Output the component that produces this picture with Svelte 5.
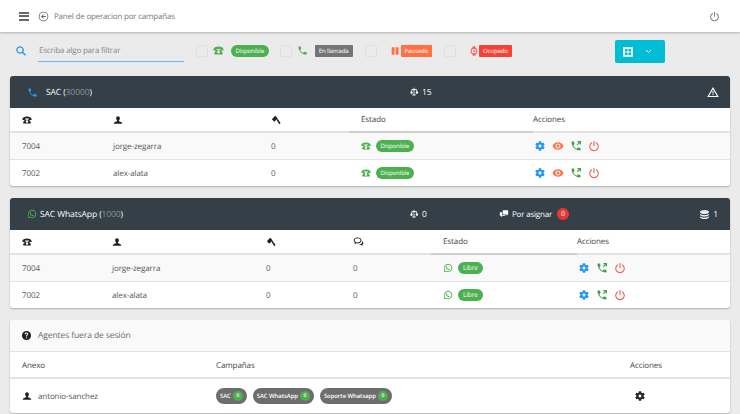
<script>
  const paths = {
    phone: 'M6.62 10.79c1.44 2.83 3.76 5.14 6.59 6.59l2.2-2.2c.27-.27.67-.36 1.02-.24 1.12.37 2.33.57 3.57.57.55 0 1 .45 1 1V20c0 .55-.45 1-1 1-9.39 0-17-7.61-17-17 0-.55.45-1 1-1h3.5c.55 0 1 .45 1 1 0 1.25.2 2.45.57 3.57.11.35.03.74-.25 1.02l-2.2 2.2z',
    transfer: 'M6.62 10.79c1.44 2.83 3.76 5.14 6.59 6.59l2.2-2.2c.27-.27.67-.36 1.02-.24 1.12.37 2.33.57 3.57.57.55 0 1 .45 1 1V20c0 .55-.45 1-1 1-9.39 0-17-7.61-17-17 0-.55.45-1 1-1h3.5c.55 0 1 .45 1 1 0 1.25.2 2.45.57 3.57.11.35.03.74-.25 1.02l-2.2 2.2zM15 2h7v7h-2.400V6.100l-4.500 4.500-1.700-1.700 4.500-4.500H15z',
    classic: 'M1 10C1 6 6 3.500 12 3.500S23 6 23 10v2h-6V8.500H7V12H1zM8 10h2v2h4v-2h2l5 7v3.500H3V17zM12 12.500a3 3 0 1 0 0 6 3 3 0 0 0 0-6z',
    person: 'M12 3c2.800 0 4.500 2 4.500 5 0 2.300-1 4.200-2.300 5.200v1.600c3.200.8 7.300 2 7.800 4.200v2H2v-2c.5-2.200 4.600-3.400 7.800-4.200v-1.600C8.500 12.200 7.500 10.300 7.500 8c0-3 1.700-5 4.500-5z',
    gavel: 'M2 10L10 2l6 6-8 8zM13 11.500l2.500-2.500 7.500 10-3 3z',
    chat: 'M10 3C5 3 1.500 5.800 1.500 9.500c0 2 1 3.700 2.700 4.900L3 18l4.500-2c.8.200 1.600.300 2.500.300 5 0 8.500-2.900 8.500-6.800S15 3 10 3zm0 2c3.700 0 6.500 2 6.500 4.500S13.700 14 10 14c-.9 0-1.700-.1-2.500-.4l-1.300.6.300-1.100C4.600 12.200 3.500 11 3.500 9.500 3.500 7 6.300 5 10 5zM20 11c1.600.9 2.500 2.300 2.500 3.800 0 1.400-.7 2.600-2 3.500l1 3-3.500-1.800c-.8.200-1.500.300-2.300.300-1.500 0-2.800-.4-3.900-1 3.500-.1 6.800-1.500 8-4.300.2-.5.300-1 .2-3.500z',
    whatsapp: 'M12 2a10 10 0 0 0-8.600 15L2 22l5.200-1.400A10 10 0 1 0 12 2zm0 2a8 8 0 1 1-4.300 14.700l-.4-.2-2.500.7.7-2.400-.3-.4A8 8 0 0 1 12 4zM8.900 7.500c-.4 0-.9.200-1.300.7-.5.600-.9 1.300-.8 2.300.1 1.300 1 2.800 2.200 4 1.400 1.400 3 2.200 4.300 2.400 1 .1 1.900-.3 2.400-.9.4-.5.500-1.100.4-1.500l-2-1-.9 1c-.8-.2-1.800-.9-2.500-1.600-.7-.7-1.200-1.500-1.400-2.100l.8-1-.8-2.200z',
    gear: 'M19.140 12.940c.04-.3.06-.61.06-.94 0-.32-.02-.64-.07-.94l2.030-1.580c.18-.14.23-.41.12-.61l-1.920-3.320c-.12-.22-.37-.29-.59-.22l-2.390.96c-.5-.38-1.030-.7-1.620-.94l-.36-2.540c-.04-.24-.24-.41-.48-.41h-3.840c-.24 0-.43.17-.47.41l-.36 2.540c-.59.24-1.130.57-1.620.94l-2.390-.96c-.22-.08-.47 0-.59.22L2.740 8.870c-.12.21-.08.47.12.61l2.030 1.580c-.05.3-.09.63-.09.94s.02.64.07.94l-2.030 1.580c-.18.14-.23.41-.12.61l1.920 3.320c.12.22.37.29.59.22l2.390-.96c.5.38 1.030.7 1.620.94l.36 2.540c.05.24.24.41.48.41h3.840c.24 0 .44-.17.47-.41l.36-2.540c.59-.24 1.130-.56 1.620-.94l2.390.96c.22.08.47 0 .59-.22l1.920-3.320c.12-.22.07-.47-.12-.61l-2.010-1.580zM12 15c-1.650 0-3-1.350-3-3s1.350-3 3-3 3 1.350 3 3-1.350 3-3 3z',
    eye: 'M12 4.500C7 4.500 2.730 7.610 1 12c1.730 4.390 6 7.500 11 7.500s9.270-3.110 11-7.500c-1.730-4.390-6-7.500-11-7.500zM12 17c-2.760 0-5-2.240-5-5s2.240-5 5-5 5 2.240 5 5-2.240 5-5 5zm0-8c-1.660 0-3 1.340-3 3s1.340 3 3 3 3-1.340 3-3-1.340-3-3-3z',
    power: 'M11 2h2v10h-2zM16.500 4.600l-1.300 1.600a7.500 7.500 0 1 1-6.400 0L7.500 4.600a9.500 9.500 0 1 0 9 0z',
    pause: 'M4 3h7v18H4zM13.500 3h7v18h-7z',
    watch: 'M8.500 1h7v3h-7zM8.500 20h7v3h-7zM12 4a8 8 0 1 0 0 16 8 8 0 0 0 0-16zm0 2a6 6 0 1 1 0 12 6 6 0 0 1 0-12zM11 8h2v4h3v2h-5z',
    warning: 'M12 2L.5 22h23zM12 6.500L19.800 20H4.200zM11 10h2v5.500h-2zM11 16.500h2v2h-2z',
    scale: 'M11 2h2v2.500l6 1v1.500l3 6.500c0 1.700-1.500 2.500-3 2.500s-3-.8-3-2.500l2.500-5.800L13 7v11h3v2.500H8V18h3V7l-4.500 1.200L9 14c0 1.700-1.500 2.500-3 2.500S3 15.700 3 14l3-6.500V5.500l5-1z',
    layers: 'M12 2C6.500 2 2 4 2 6.500S6.500 11 12 11s10-2 10-4.500S17.500 2 12 2zM2 10.500V12c0 2.500 4.500 4.500 10 4.500S22 14.500 22 12v-1.500c-1.800 1.800-5.500 2.800-10 2.800s-8.200-1-10-2.800zM2 16v1.500C2 20 6.500 22 12 22s10-2 10-4.500V16c-1.800 1.800-5.500 2.800-10 2.800S3.800 17.800 2 16z',
    comments: 'M9 3h13v10h-2v3l-3-3H9zM2 8h5.500v6.500H15V16H8l-3.500 4v-4H2z',
    help: 'M12 2a10 10 0 1 0 0 20 10 10 0 0 0 0-20zm1 16h-2.200v-2.200H13zm2.300-7.600c-.9 1.200-2.300 1.500-2.300 3.600h-2.200c0-3 1.500-3.400 2.300-4.400.6-.8.300-2-1.100-2-1.100 0-1.700.8-1.800 1.800H7.900C8 6.900 9.600 5.600 12 5.600c3 0 4.500 2.600 3.300 4.800z',
    search: 'M10 2.500a7.500 7.500 0 1 0 4.500 13.500l5.500 5.500 2-2-5.500-5.500A7.500 7.500 0 0 0 10 2.500zm0 2.500a5 5 0 1 1 0 10 5 5 0 0 1 0-10z',
    back: 'M12 1.500a10.500 10.500 0 1 0 0 21 10.500 10.500 0 0 0 0-21zm0 1.800a8.700 8.700 0 1 1 0 17.400 8.700 8.700 0 0 1 0-17.400zM11.500 7l1.300 1.300-2.800 2.800h7v1.800h-7l2.800 2.800-1.300 1.300-5-5z'
  };

  const voiceRows = [
    { ext: '7004', name: 'jorge-zegarra', calls: 0 },
    { ext: '7002', name: 'alex-alata', calls: 0 }
  ];
  const waRows = [
    { ext: '7004', name: 'jorge-zegarra', calls: 0, chats: 0 },
    { ext: '7002', name: 'alex-alata', calls: 0, chats: 0 }
  ];
  const campaigns = ['SAC', 'SAC WhatsApp', 'Soporte Whatsapp'];
</script>

{#snippet icon(name, size, color)}
  <svg class="icon" width={size} height={size} viewBox="0 0 24 24" fill={color} fill-rule="evenodd"><path d={paths[name]} /></svg>
{/snippet}

<header class="topbar">
  <div class="burger"><span></span><span></span><span></span></div>
  {@render icon('back', 11, '#666')}
  <span class="page-title">Panel de operacion por campañas</span>
  <div class="logout">{@render icon('power', 11, '#777')}</div>
</header>

<section class="filters">
  <div class="search">{@render icon('search', 12, '#2196f3')}</div>
  <div class="filter-input">Escriba algo para filtrar</div>
  <div class="legend l1">
    <span class="check"></span>
    <span class="legend-icon">{@render icon('classic', 11, '#4caf50')}</span>
    <span class="badge pill green">Disponible</span>
  </div>
  <div class="legend l2">
    <span class="check"></span>
    <span class="legend-icon">{@render icon('phone', 11, '#4caf50')}</span>
    <span class="badge grey">En llamada</span>
  </div>
  <div class="legend l3">
    <span class="check"></span>
    <span class="legend-icon">{@render icon('pause', 10, '#ff7043')}</span>
    <span class="badge orange">Pausado</span>
  </div>
  <div class="legend l4">
    <span class="check"></span>
    <span class="legend-icon">{@render icon('watch', 10, '#f44336')}</span>
    <span class="badge red">Ocupado</span>
  </div>
  <button class="grid-btn">
    <svg width="10" height="10" viewBox="0 0 10 10"><rect width="10" height="10" rx="1" fill="#e6fafd" /><path d="M2 2h2.500v2.500H2zM5.500 2H8v2.500H5.500zM2 5.500h2.500V8H2zM5.500 5.500H8V8H5.500z" fill="#00bcd4" /></svg>
    <svg class="chev" width="7" height="5" viewBox="0 0 7 5"><path d="M1 1l2.500 2.500L6 1" fill="none" stroke="#d9f6fa" stroke-width="1" /></svg>
  </button>
</section>

<main class="panels">
  <article class="panel">
    <div class="panel-head voice">
      <span class="title">{@render icon('phone', 11, '#2196f3')}<span>SAC (<em>30000</em>)</span></span>
      <span class="stat">{@render icon('scale', 10, '#fff')} 15</span>
      <span class="alert">{@render icon('warning', 12, '#fff')}</span>
    </div>
    <div class="row thead voice-cols">
      <span>{@render icon('classic', 10, '#222')}</span>
      <span>{@render icon('person', 10, '#222')}</span>
      <span>{@render icon('gavel', 10, '#222')}</span>
      <span class="sorted">Estado</span>
      <span>Acciones</span>
    </div>
    {#each voiceRows as row, i}
      <div class="row voice-cols" class:odd={i === 0}>
        <span>{row.ext}</span>
        <span>{row.name}</span>
        <span>{row.calls}</span>
        <span class="state">{@render icon('classic', 10, '#4caf50')}<span class="badge pill green">Disponible</span></span>
        <span class="actions">
          {@render icon('gear', 12, '#2196f3')}
          {@render icon('eye', 12, '#ff7043')}
          {@render icon('transfer', 12, '#43a047')}
          {@render icon('power', 12, '#f4514a')}
        </span>
      </div>
    {/each}
  </article>

  <article class="panel">
    <div class="panel-head wa">
      <span class="title">{@render icon('whatsapp', 10, '#4caf50')}<span>SAC WhatsApp (<em>1000</em>)</span></span>
      <span class="stat">{@render icon('scale', 10, '#fff')} 0</span>
      <span class="assign">{@render icon('comments', 10, '#fff')} Por asignar <b>0</b></span>
      <span class="queues">{@render icon('layers', 11, '#e8e8e8')} 1</span>
    </div>
    <div class="row thead wa-cols">
      <span>{@render icon('classic', 10, '#222')}</span>
      <span>{@render icon('person', 10, '#222')}</span>
      <span>{@render icon('gavel', 10, '#222')}</span>
      <span>{@render icon('chat', 11, '#222')}</span>
      <span class="sorted">Estado</span>
      <span>Acciones</span>
    </div>
    {#each waRows as row, i}
      <div class="row wa-cols" class:odd={i === 0}>
        <span>{row.ext}</span>
        <span>{row.name}</span>
        <span>{row.calls}</span>
        <span>{row.chats}</span>
        <span class="state">{@render icon('whatsapp', 10, '#4caf50')}<span class="badge pill green libre">Libre</span></span>
        <span class="actions">
          {@render icon('gear', 12, '#2196f3')}
          {@render icon('transfer', 12, '#43a047')}
          {@render icon('power', 12, '#f4514a')}
        </span>
      </div>
    {/each}
  </article>

  <article class="panel">
    <div class="panel-head light">
      {@render icon('help', 11, '#222')}
      <span>Agentes fuera de sesión</span>
    </div>
    <div class="row thead off-cols">
      <span>Anexo</span>
      <span>Campañas</span>
      <span>Acciones</span>
    </div>
    <div class="row off-cols off-row">
      <span class="agent">{@render icon('person', 10, '#222')} antonio-sanchez</span>
      <span class="chips">
        {#each campaigns as c}
          <span class="chip">{c}<i>0</i></span>
        {/each}
      </span>
      <span class="off-gear">{@render icon('gear', 12, '#222')}</span>
    </div>
  </article>
</main>

<style>
  :global(body) {
    background: #ebebeb;
    font-family: "Open Sans", sans-serif;
    font-size: 8px;
    letter-spacing: -0.1px;
    text-rendering: geometricPrecision;
    color: #555;
    height: 414px;
    overflow: hidden;
  }
  .icon { display: block; flex: none; }
  .topbar {
    height: 32px;
    background: #fff;
    box-shadow: 0 1px 2px rgba(0, 0, 0, 0.25);
    display: flex;
    align-items: center;
    padding: 0 20px 0 19px;
    box-sizing: border-box;
  }
  .burger { width: 10px; display: flex; flex-direction: column; gap: 1.500px; margin-right: 9px; }
  .burger span { height: 2px; background: #666; }
  .page-title { margin-left: 5px; color: #777; font-size: 8px; letter-spacing: -0.2px; }
  .logout { margin-left: auto; }

  .filters { height: 44px; display: flex; align-items: center; padding: 0 0 7px 15px; box-sizing: border-box; position: relative; }
  .search { width: 23px; }
  .filter-input {
    width: 146px;
    height: 22px;
    line-height: 22px;
    box-sizing: border-box;
    margin-top: 1px;
    border-bottom: 1px solid #64b5f6;
    color: #888;
    font-size: 8px;
    letter-spacing: -0.2px;
    padding-left: 1px;
  }
  .legend { display: flex; align-items: center; }
  .check { width: 12px; height: 12px; box-sizing: border-box; border: 1px solid #e0e0e0; border-radius: 2px; }
  .l1 { margin-left: 12px; }
  .l2 { margin-left: 11px; }
  .l3, .l4 { margin-left: 12px; }
  .l1 .check, .l2 .check { margin-right: 5px; }
  .l1 .legend-icon, .l2 .legend-icon { margin-right: 7px; }
  .l3 .check, .l4 .check { margin-right: 13px; }
  .l3 .legend-icon { margin-right: 1px; }
  .badge {
    display: inline-block;
    color: #fff;
    font-size: 6px;
    letter-spacing: -0.1px;
    line-height: 12px;
    height: 12px;
    padding: 0 4px;
    border-radius: 1px;
    white-space: nowrap;
  }
  .pill { border-radius: 6px; padding: 0 4.500px; }
  .green { background: #4caf50; }
  .grey { background: #757575; }
  .orange { background: #ff7043; }
  .red { background: #f44336; }
  .libre { font-size: 6.500px; padding: 0 5px; }
  .grid-btn {
    position: absolute;
    left: 615px;
    top: 8px;
    width: 50px;
    height: 23px;
    background: #00bcd4;
    border: 0;
    border-radius: 2px;
    padding: 0 13px 0 8px;
    display: flex;
    align-items: center;
    justify-content: space-between;
  }

  .panels { padding: 0 10px; display: flex; flex-direction: column; gap: 12px; }
  .panel {
    background: #fff;
    border-radius: 3px;
    box-shadow: 0 1px 2px rgba(0, 0, 0, 0.25);
    overflow: hidden;
  }
  .panel-head {
    height: 32px;
    background: #343f47;
    color: #fff;
    display: flex;
    align-items: center;
    font-size: 8.500px;
    position: relative;
  }
  .title { display: flex; align-items: center; gap: 8px; padding-left: 17px; }
  .wa .title { gap: 3px; }
  .title em { font-style: normal; color: #8a979f; }
  .stat { position: absolute; left: 399px; display: flex; align-items: center; gap: 3px; }
  .alert { position: absolute; right: 11px; }
  .assign { position: absolute; left: 489px; display: flex; align-items: center; gap: 3px; font-size: 8px; letter-spacing: -0.2px; }
  .assign b { background: #e53935; font-weight: 400; width: 12px; height: 12px; border-radius: 50%; text-align: center; line-height: 12px; font-size: 6.500px; margin-left: 2px; }
  .queues { position: absolute; right: 12px; display: flex; align-items: center; gap: 3px; }

  .row { display: grid; align-items: center; height: 26px; padding-left: 12px; border-bottom: 1px solid #e3e3e3; box-sizing: border-box; }
  .row:last-child { border-bottom: 0; }
  .thead { height: 25px; color: #444; border-bottom: 2px solid #e3e3e3; }
  .odd { background: #f9f9f9; height: 27px; }
  .voice-cols { grid-template-columns: 91px 158px 90px 172px 1fr; }
  .wa-cols { grid-template-columns: 90px 154px 87px 90px 134px 1fr; }
  .off-cols { grid-template-columns: 194px 414px 1fr; }
  .sorted {
    align-self: stretch;
    display: flex;
    align-items: center;
    margin: 0 0 -2px -12px;
    padding-left: 12px;
    border-bottom: 2px solid #cfcfcf;
  }
  .state { display: flex; align-items: center; gap: 5px; }
  .actions { display: flex; align-items: center; gap: 6px; padding-left: 1px; }
  .light { background: #fafafa; color: #666; font-size: 8.500px; gap: 5px; padding-left: 11px; height: 31px; border-bottom: 1px solid #e3e3e3; }
  .light .icon { margin-right: 1px; }
  .off-cols.thead { height: 27px; padding-top: 1px; }
  .off-row { height: 34px; }
  .agent { display: flex; align-items: center; gap: 6px; }
  .chips { display: flex; gap: 6px; }
  .chip {
    display: flex;
    align-items: center;
    gap: 2px;
    height: 16px;
    padding: 0 4px;
    background: #6d6d6d;
    color: #fff;
    border-radius: 8px;
    font-size: 6px;
    letter-spacing: -0.1px;
    font-weight: 600;
  }
  .chip i { font-style: normal; width: 10px; height: 10px; border-radius: 50%; background: #4caf50; text-align: center; line-height: 10px; font-size: 5px; }
  .off-gear { padding-left: 4px; }
</style>
